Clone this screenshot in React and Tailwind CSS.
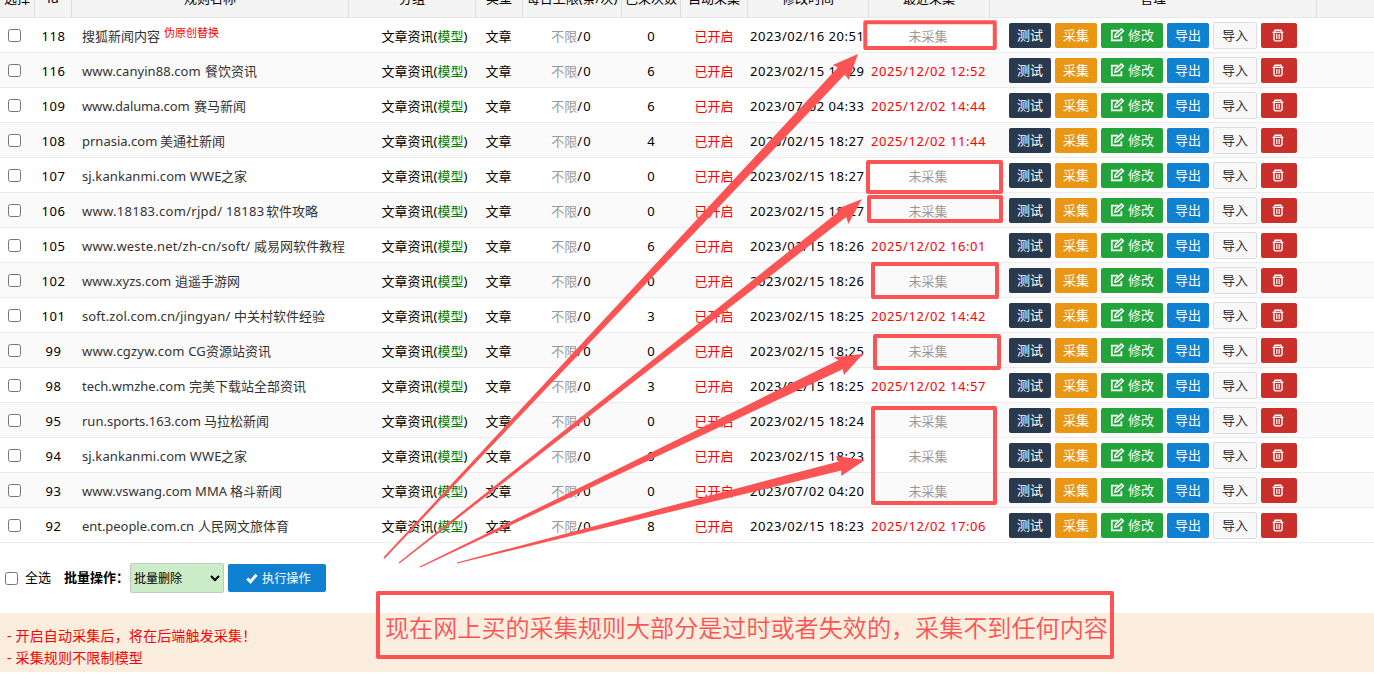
import React from "react";

const rows = [
  { id: 118, site: "", siteClass: "", name: "搜狐新闻内容", tag: "伪原创替换", count: 0, edited: "2023/02/16 20:51", last: null },
  { id: 116, site: "www.canyin88.com", siteClass: "w-[123px] tracking-[0.05px]", name: "餐饮资讯", count: 6, edited: "2023/02/15 18:29", last: "2025/12/02 12:52" },
  { id: 109, site: "www.daluma.com", siteClass: "w-[112px] tracking-[-0.15px]", name: "赛马新闻", count: 6, edited: "2023/07/02 04:33", last: "2025/12/02 14:44" },
  { id: 108, site: "prnasia.com", siteClass: "w-[78px]", name: "美通社新闻", count: 4, edited: "2023/02/15 18:27", last: "2025/12/02 11:44" },
  { id: 107, site: "sj.kankanmi.com WWE", siteClass: "w-[139px] tracking-[0.1px]", name: "之家", count: 0, edited: "2023/02/15 18:27", last: null },
  { id: 106, site: "www.18183.com/rjpd/ 18183", siteClass: "w-[184px] tracking-[0.28px]", name: "软件攻略", count: 0, edited: "2023/02/15 18:27", last: null },
  { id: 105, site: "www.weste.net/zh-cn/soft/", siteClass: "w-[172px] tracking-[0.2px]", name: "威易网软件教程", count: 6, edited: "2023/02/15 18:26", last: "2025/12/02 16:01" },
  { id: 102, site: "www.xyzs.com", siteClass: "w-[93px]", name: "逍遥手游网", count: 0, edited: "2023/02/15 18:26", last: null },
  { id: 101, site: "soft.zol.com.cn/jingyan/", siteClass: "w-[152px] tracking-[0.1px]", name: "中关村软件经验", count: 3, edited: "2023/02/15 18:25", last: "2025/12/02 14:42" },
  { id: 99, site: "www.cgzyw.com CG", siteClass: "w-[124px] tracking-[0.2px]", name: "资源站资讯", count: 0, edited: "2023/02/15 18:25", last: null },
  { id: 98, site: "tech.wmzhe.com", siteClass: "w-[107px]", name: "完美下载站全部资讯", count: 3, edited: "2023/02/15 18:25", last: "2025/12/02 14:57" },
  { id: 95, site: "run.sports.163.com", siteClass: "w-[122px]", name: "马拉松新闻", count: 0, edited: "2023/02/15 18:24", last: null },
  { id: 94, site: "sj.kankanmi.com WWE", siteClass: "w-[139px] tracking-[0.1px]", name: "之家", count: 0, edited: "2023/02/15 18:23", last: null },
  { id: 93, site: "www.vswang.com MMA", siteClass: "w-[148px]", name: "格斗新闻", count: 0, edited: "2023/07/02 04:20", last: null },
  { id: 92, site: "ent.people.com.cn", siteClass: "w-[116px] tracking-[-0.05px]", name: "人民网文旅体育", count: 8, edited: "2023/02/15 18:23", last: "2025/12/02 17:06" },
];

const grid =
  "grid grid-cols-[35px_37px_277px_127px_47px_99px_59px_67px_121px_121px_327px_57px]";

const headers = ["选择", "id", "规则名称", "分组", "类型", "每日上限(条/次)", "已采次数", "自动采集", "修改时间", "最近采集", "管理"];

function Header() {
  return (
    <div className={`${grid} h-[18px] overflow-hidden border-b border-[#e6e6e6] bg-[#f4f4f4]`}>
      {headers.map((h) => (
        <div key={h} className="flex h-[17px] justify-center overflow-hidden whitespace-nowrap border-r border-[#dcdcdc]">
          <span className="-mt-[11px] leading-[18px]">{h}</span>
        </div>
      ))}
      <div />
    </div>
  );
}

function Checkbox() {
  return <span className="block size-[13px] shrink-0 rounded-[2.5px] border border-[#767676] bg-white" />;
}

function EditIcon() {
  return (
    <svg width="15" height="14" viewBox="0 0 15 14" fill="none" stroke="currentColor">
      <path d="M8 2.7H1.8v9.6h9.6V8.2" strokeWidth="1.7" />
      <path d="M4.9 9.1l.6-2.6L11.4.9l2 2L7.5 8.6z" strokeWidth="1.5" />
    </svg>
  );
}

function TrashIcon() {
  return (
    <svg width="12" height="13" viewBox="0 0 12 13" fill="none" stroke="currentColor">
      <path d="M0.6 3.4H11.4M2.2 3.2L3 1.2H9L9.8 3.2" strokeWidth="1.4" />
      <path d="M2 3.4V10.6L3.3 11.9H8.7L10 10.6V3.4" strokeWidth="1.4" />
      <path d="M4.8 5V10M7.2 5V10" strokeWidth="1.2" />
    </svg>
  );
}

function Actions() {
  const base = "flex h-[25px] items-center justify-center rounded-xs text-white";
  return (
    <div className="flex items-center gap-1 pl-[19px]">
      <button className={`${base} w-[42px] bg-[#293a4e]`}>测试</button>
      <button className={`${base} w-[42px] bg-[#e99614]`}>采集</button>
      <button className={`${base} w-[62px] gap-[3px] bg-[#22a43a]`}><EditIcon />修改</button>
      <button className={`${base} w-[42px] bg-[#1080d0]`}>导出</button>
      <button className="flex h-[27px] w-[44px] items-center justify-center rounded-xs border border-[#dddddd] bg-[#f8f8f8] text-[#333]">导入</button>
      <button className={`${base} w-[36px] pr-[3px] bg-[#c9302c]`}><TrashIcon /></button>
    </div>
  );
}

function Row({ row, striped }) {
  return (
    <div className={`${grid} h-[35px] items-center border-b border-[#ececec] ${striped ? "bg-[#fafafa]" : "bg-white"}`}>
      <div className="pl-2"><Checkbox /></div>
      <div className="pt-px text-center tracking-[0.55px]">{row.id}</div>
      <div className="flex whitespace-nowrap pl-[10px] pt-[2px] text-[#333]">
        {row.site && <span className={row.siteClass}>{row.site}</span>}
        <span>{row.name}</span>
        {row.tag && <span className="-mt-[3px] ml-1 text-[11px] text-[#f00]">{row.tag}</span>}
      </div>
      <div className="pl-[24px] pt-px text-center">文章资讯(<span className="text-[#008000]">模型</span>)</div>
      <div className="pr-[2px] pt-px text-center">文章</div>
      <div className="pr-[3px] pt-px text-center"><span className="text-[#999]">不限</span>/<span className="pl-px">0</span></div>
      <div className="pr-px pt-px text-center">{row.count}</div>
      <div className="pr-px pt-px text-center text-[#f00]">已开启</div>
      <div className="whitespace-nowrap pl-[2px] pt-px tracking-[0.55px]">{row.edited}</div>
      {row.last ? (
        <div className="whitespace-nowrap pl-[2px] pt-px tracking-[0.58px] text-[#f00]">{row.last}</div>
      ) : (
        <div className="pr-[3px] pt-px text-center text-[#999]">未采集</div>
      )}
      <Actions />
      <div />
    </div>
  );
}

function BatchBar() {
  return (
    <div className="flex h-[70px] items-center pl-[5px]">
      <Checkbox />
      <span className="ml-[7px] w-[39px] pb-[2px]">全选</span>
      <b className="w-[66px] whitespace-nowrap pb-[2px] font-bold">批量操作：</b>
      <div className="flex h-[30px] w-[94px] items-center justify-between rounded-xs border border-[#c6c6c6] bg-[#cbedc7] pl-[3px] pr-[3px] text-[12px]">
        <span className="pt-[2px]">批量删除</span>
        <svg width="10" height="7" viewBox="0 0 10 7" fill="none" stroke="#000" strokeWidth="2">
          <path d="M1 1l4 4 4-4" />
        </svg>
      </div>
      <button className="ml-1 flex h-[28px] w-[98px] items-center rounded-xs bg-[#1080d0] pl-[18px] text-[12.2px] text-white">
        <svg width="12" height="11" viewBox="0 0 12 11" fill="none" stroke="currentColor" strokeWidth="3">
          <path d="M1.3 5.5l3.2 3.2 6-7" />
        </svg>
        <span className="ml-1 whitespace-nowrap pt-px">执行操作</span>
      </button>
    </div>
  );
}

function Annotations() {
  return (
    <>
      <svg className="pointer-events-none absolute left-0 top-0" width="1374" height="674" fill="#fc5454">
        <g fill="none" stroke="#fc5454" strokeWidth="4" strokeLinejoin="round">
          <rect x="865.3" y="22.2" width="129.5" height="25.8" />
          <rect x="868" y="162" width="133" height="30" />
          <rect x="869" y="197" width="132" height="24" />
          <rect x="873" y="264" width="124" height="33" />
          <rect x="875" y="336" width="124" height="32" />
          <rect x="873" y="408" width="122" height="95" />
          <rect x="378" y="593" width="734" height="64" />
        </g>
        <path d="M383.4 557.5L837.8 67.4L832.7 65L858 54L848.7 80L845.1 74.2L384.6 558.7z" />
        <path d="M398.6 562.5L840.7 210L835 209.8L862 199L848.3 224L846.3 217L399.4 563.6z" />
        <path d="M419.7 566.4L838.3 360.3L833.7 357.3L863 354L844 375L842.7 369.3L420.3 567.6z" />
        <path d="M456.8 562.4L838.8 461.5L836 456L865 460L841.3 476L841.2 470.5L457.2 563.6z" />
      </svg>
      <p className="absolute left-[385px] top-[609px] whitespace-nowrap font-['Noto_Sans_CJK_SC',sans-serif] text-[24.1px] font-[350] leading-[36px] text-[#fc5454]">
        现在网上买的采集规则大部分是过时或者失效的，采集不到任何内容
      </p>
    </>
  );
}

export default function App() {
  return (
    <div className="relative h-[674px] w-[1374px] overflow-hidden bg-white font-['Noto_Sans','Noto_Sans_CJK_SC',sans-serif] text-[13px] leading-[20px] text-black">
      <Header />
      {rows.map((r, i) => <Row key={r.id} row={r} striped={i % 2 === 1} />)}
      <BatchBar />
      <div className="h-[59px] bg-[#fbeede] pl-[7px] pt-[12px] text-[14px] leading-[22px] tracking-[0.17px] text-[#f00]">
        <p>- 开启自动采集后，将在后端触发采集！</p>
        <p>- 采集规则不限制模型</p>
      </div>
      <Annotations />
    </div>
  );
}
